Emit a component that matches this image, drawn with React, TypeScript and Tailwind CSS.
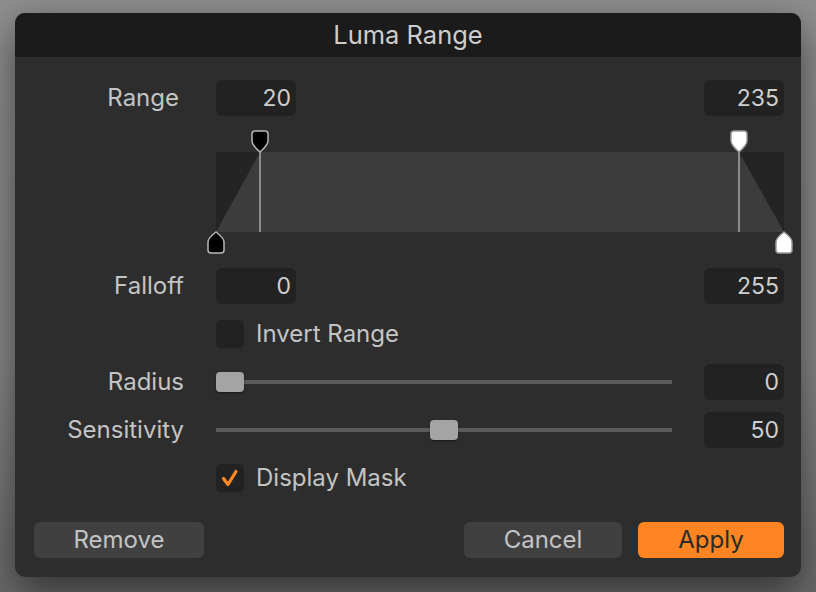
import React from 'react';

const font = { fontFamily: 'Inter, "Liberation Sans", sans-serif' };

const NumField = ({ value }: { value: string }) => (
  <div className="w-[80px] h-[36px] rounded-[6px] bg-[#222222] flex items-center justify-end pr-[5px] text-[23px] leading-none text-[#cfcfcf]">
    {value}
  </div>
);

const Label = ({ children, shift }: { children: React.ReactNode; shift?: boolean }) => (
  <div className={shift ? 'w-[169px] pr-[5px] text-right text-[24px] text-[#c4c4c4] leading-none' : 'w-[169px] text-right text-[24px] text-[#c4c4c4] leading-none'}>
    {children}
  </div>
);

const Checkbox = ({ checked }: { checked?: boolean }) => (
  <div className="w-[28px] h-[28px] rounded-[5px] bg-[#222222] flex items-center justify-center">
    {checked && (
      <svg width="20" height="20" viewBox="0 0 20 20">
        <path d="M3.5 10.5 L8 16.5 L16 3.5" fill="none" stroke="#ff8a22" strokeWidth="3.2" strokeLinecap="round" strokeLinejoin="round" />
      </svg>
    )}
  </div>
);

const Slider = ({ pos }: { pos: number }) => (
  <div className="relative w-[456px] h-[20px] flex items-center">
    <div className="w-full h-[4px] bg-[#5b5b5b]" />
    <div
      className="absolute top-0 w-[28px] h-[20px] rounded-[4px] bg-[#a4a4a4] shadow-[0_1px_2px_rgba(0,0,0,0.5)]"
      style={{ left: pos }}
    />
  </div>
);

// top handle: flat top, points down
const topHandle = (cx: number) =>
  `M${cx - 8} 4 Q${cx - 8} 1 ${cx - 5} 1 H${cx + 5} Q${cx + 8} 1 ${cx + 8} 4 V11 Q${cx + 8} 15 ${cx} 22 Q${cx - 8} 15 ${cx - 8} 11 Z`;

// bottom handle: points up, flat bottom
const bottomHandle = (cx: number) =>
  `M${cx - 8} 120 V112 Q${cx - 8} 108 ${cx} 102 Q${cx + 8} 108 ${cx + 8} 112 V120 Q${cx + 8} 123 ${cx + 5} 123 H${cx - 5} Q${cx - 8} 123 ${cx - 8} 120 Z`;

const RangeGraph = () => (
  <svg width="586" height="124" viewBox="0 0 586 124" className="block">
    <rect x="9" y="22" width="568" height="80" fill="#242424" />
    <polygon points="9,102 53,22 532,22 577,102" fill="#3c3c3c" />
    <line x1="53" y1="20" x2="53" y2="102" stroke="#8c8c8c" strokeWidth="2" />
    <line x1="532" y1="20" x2="532" y2="102" stroke="#8c8c8c" strokeWidth="2" />
    <path d={topHandle(53)} fill="#000" stroke="#b8b8b8" strokeWidth="1.5" />
    <path d={topHandle(532)} fill="#fff" stroke="#9a9a9a" strokeWidth="1.5" />
    <path d={bottomHandle(9)} fill="#000" stroke="#b8b8b8" strokeWidth="1.5" />
    <path d={bottomHandle(577)} fill="#fff" stroke="#9a9a9a" strokeWidth="1.5" />
  </svg>
);

const Button = ({ children, primary, width }: { children: React.ReactNode; primary?: boolean; width: string }) => (
  <div
    className={
      primary
        ? `${width} h-[36px] rounded-[6px] bg-[#fe8521] text-[#2a2a2a] text-[24px] leading-none flex items-center justify-center`
        : `${width} h-[36px] rounded-[6px] bg-[#404040] text-[#c4c4c4] text-[24px] leading-none flex items-center justify-center`
    }
  >
    {children}
  </div>
);

export default function App() {
  return (
    <div
      className="w-[816px] h-[592px] overflow-hidden bg-[linear-gradient(#8f8f8f,#8a8a8a_60%,#6a6a6a)] pt-[13px] pl-[15px]"
      style={font}
    >
      <div className="w-[786px] h-[564px] rounded-[10px] bg-[#2d2d2d] overflow-hidden shadow-[0_14px_40px_rgba(0,0,0,0.55)] flex flex-col">
        <div className="h-[44px] bg-[#1b1b1b] flex items-center justify-center text-[25.5px] leading-none text-[#cdcdcd]">
          Luma Range
        </div>

        <div className="flex flex-col pt-[23px]">
          {/* Range */}
          <div className="flex items-center">
            <Label shift>Range</Label>
            <div className="ml-[32px] w-[568px] flex justify-between">
              <NumField value="20" />
              <NumField value="235" />
            </div>
          </div>

          {/* graph */}
          <div className="mt-[14px] ml-[192px]">
            <RangeGraph />
          </div>

          {/* Falloff */}
          <div className="flex items-center mt-[14px]">
            <Label>Falloff</Label>
            <div className="ml-[32px] w-[568px] flex justify-between">
              <NumField value="0" />
              <NumField value="255" />
            </div>
          </div>

          {/* Invert */}
          <div className="flex items-center mt-[16px] ml-[201px] gap-[12px]">
            <Checkbox />
            <span className="text-[24px] leading-none text-[#c4c4c4]">Invert Range</span>
          </div>

          {/* Radius */}
          <div className="flex items-center mt-[16px]">
            <Label>Radius</Label>
            <div className="ml-[32px] w-[568px] flex items-center justify-between">
              <Slider pos={0} />
              <NumField value="0" />
            </div>
          </div>

          {/* Sensitivity */}
          <div className="flex items-center mt-[12px]">
            <Label>Sensitivity</Label>
            <div className="ml-[32px] w-[568px] flex items-center justify-between">
              <Slider pos={214} />
              <NumField value="50" />
            </div>
          </div>

          {/* Display mask */}
          <div className="flex items-center mt-[16px] ml-[201px] gap-[12px]">
            <Checkbox checked />
            <span className="text-[24px] leading-none text-[#c4c4c4]">Display Mask</span>
          </div>

          {/* buttons */}
          <div className="flex items-center mt-[30px] pl-[19px] pr-[17px]">
            <Button width="w-[170px]">Remove</Button>
            <div className="flex-1" />
            <Button width="w-[158px]">Cancel</Button>
            <div className="w-[16px]" />
            <Button primary width="w-[146px]">Apply</Button>
          </div>
        </div>
      </div>
    </div>
  );
}
